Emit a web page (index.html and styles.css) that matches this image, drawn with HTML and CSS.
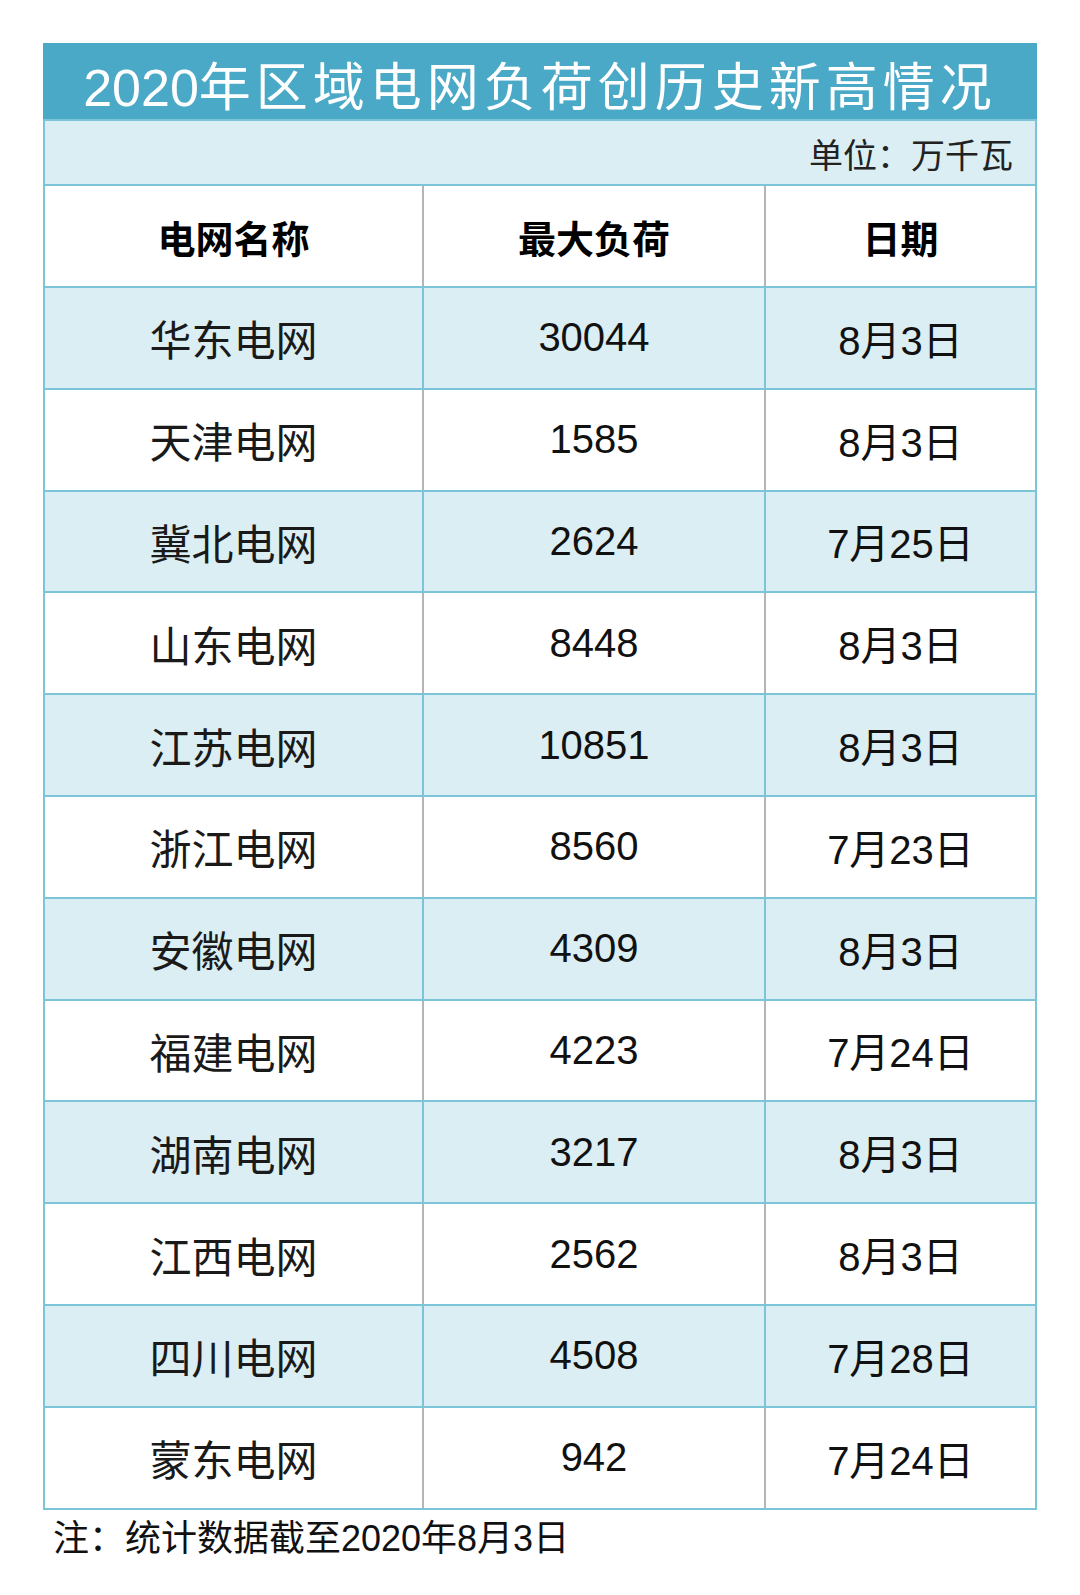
FILE: index.html
```html
<!DOCTYPE html>
<html lang="zh-CN">
<head>
<meta charset="utf-8">
<title>2020年区域电网负荷创历史新高情况</title>
<link rel="stylesheet" href="styles.css">
</head>
<body>
<div class="page">
  <div class="sheet">
    <div class="title"><span class="num">2020</span>年区域电网负荷创历史新高情况</div>
    <div class="unit">单位：万千瓦</div>
    <div class="row head">
      <div class="cell">电网名称</div>
      <div class="cell">最大负荷</div>
      <div class="cell">日期</div>
    </div>
    <div class="row tint"><div class="cell name">华东电网</div><div class="cell">30044</div><div class="cell">8月3日</div></div>
    <div class="row"><div class="cell name">天津电网</div><div class="cell">1585</div><div class="cell">8月3日</div></div>
    <div class="row tint"><div class="cell name">冀北电网</div><div class="cell">2624</div><div class="cell">7月25日</div></div>
    <div class="row"><div class="cell name">山东电网</div><div class="cell">8448</div><div class="cell">8月3日</div></div>
    <div class="row tint"><div class="cell name">江苏电网</div><div class="cell">10851</div><div class="cell">8月3日</div></div>
    <div class="row"><div class="cell name">浙江电网</div><div class="cell">8560</div><div class="cell">7月23日</div></div>
    <div class="row tint"><div class="cell name">安徽电网</div><div class="cell">4309</div><div class="cell">8月3日</div></div>
    <div class="row"><div class="cell name">福建电网</div><div class="cell">4223</div><div class="cell">7月24日</div></div>
    <div class="row tint"><div class="cell name">湖南电网</div><div class="cell">3217</div><div class="cell">8月3日</div></div>
    <div class="row"><div class="cell name">江西电网</div><div class="cell">2562</div><div class="cell">8月3日</div></div>
    <div class="row tint"><div class="cell name">四川电网</div><div class="cell">4508</div><div class="cell">7月28日</div></div>
    <div class="row"><div class="cell name">蒙东电网</div><div class="cell">942</div><div class="cell">7月24日</div></div>
  </div>
  <div class="note">注：统计数据截至2020年8月3日</div>
</div>
</body>
</html>
```

FILE: styles.css
```css
html, body {
  margin: 0;
  padding: 0;
  background: #ffffff;
}

body {
  font-family: "Liberation Sans", "Noto Sans CJK SC", sans-serif;
  color: #111111;
}

.page {
  padding: 43px 0 0 43px;
  width: 994px;
}

.sheet {
  width: 994px;
  box-sizing: border-box;
  border: 2px solid #7cc5d9;
  border-top: none;
}

.title {
  height: 76px;
  box-sizing: border-box;
  margin: 0 -2px;
  padding-top: 6px;
  background: #4aa9c6;
  color: #ffffff;
  font-family: "Noto Sans CJK SC", sans-serif;
  font-size: 52px;
  letter-spacing: 5px;
  line-height: 70px;
  text-align: center;
  white-space: nowrap;
}

.title .num {
  font-family: "Liberation Sans", sans-serif;
  letter-spacing: 0;
}

.unit {
  height: 65px;
  box-sizing: border-box;
  border-top: 2px solid #7cc5d9;
  background: #dbeef3;
  font-family: "Noto Sans CJK SC", sans-serif;
  font-size: 34px;
  line-height: 66px;
  text-align: right;
  padding-right: 22px;
  color: #222222;
}

.row {
  display: grid;
  grid-template-columns: 377px 342px 1fr;
  height: 101.8px;
  box-sizing: border-box;
  border-top: 2px solid #7cc5d9;
  background: #ffffff;
}

.row.head {
  height: 102px;
}

.row.tint {
  background: #dbeef3;
}

.cell {
  display: flex;
  align-items: center;
  justify-content: center;
  font-size: 40px;
  color: #111111;
}

.cell + .cell {
  border-left: 2px solid #b5b5b5;
}

.row.tint .cell + .cell {
  border-left-color: #7cc5d9;
}

.cell.name {
  font-family: "Noto Sans CJK SC", sans-serif;
  font-size: 42px;
  color: #1a1a1a;
}

.row.head .cell {
  font-family: "Noto Sans CJK SC", sans-serif;
  font-weight: 700;
  font-size: 38px;
  color: #000000;
}

.note {
  padding: 9px 0 0 10px;
  font-size: 36px;
  line-height: 40px;
  color: #111111;
}
```
